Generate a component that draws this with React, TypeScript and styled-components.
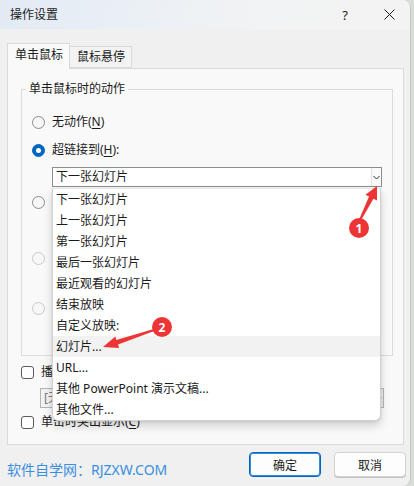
import React from "react";
import styled, { createGlobalStyle } from "styled-components";

const Global = createGlobalStyle`
  html, body { margin: 0; padding: 0; background: #d9dcd9; }
  body {
    font-family: "Noto Sans", "Noto Sans CJK SC", sans-serif;
    font-size: 12px;
    color: #1b1b1b;
  }
  * { box-sizing: border-box; }
`;

const Stage = styled.div`
  position: relative;
  width: 414px;
  height: 486px;
  overflow: hidden;
`;

const Window = styled.div`
  width: 411px;
  height: 486px;
  background: #f0f0f0;
  border-right: 1px solid #c6c6c6;
  border-radius: 0 8px 8px 0;
  display: flex;
  flex-direction: column;
  overflow: hidden;
`;

const TitleBar = styled.div`
  height: 29px;
  flex: none;
  display: flex;
  align-items: center;
  padding: 0 6px 0 10px;
  background: linear-gradient(100deg, #e2eaf4 0%, #ebf0f5 35%, #f2f3f4 65%, #f3f3f3 100%);
`;

const Title = styled.span`
  font-size: 12px;
  line-height: 16px;
  color: #1b1b1b;
  margin-right: auto;
`;

const CaptionButton = styled.span`
  width: 30px;
  height: 29px;
  display: flex;
  align-items: center;
  justify-content: center;
  font-size: 13px;
  color: #1b1b1b;
`;

const CaptionGap = styled.span`
  width: 14px;
`;

const Body = styled.div`
  flex: 1;
  display: flex;
  flex-direction: column;
  padding: 14px 6px 0 7px;
`;

const TabRow = styled.div`
  display: flex;
  align-items: flex-end;
  height: 25px;
  position: relative;
  z-index: 1;
`;

const Tab = styled.div<{ $active?: boolean }>`
  height: ${(p) => (p.$active ? "26px" : "22px")};
  margin-bottom: ${(p) => (p.$active ? "-1px" : "0")};
  padding: 0 6px 0 7px;
  display: flex;
  align-items: center;
  white-space: nowrap;
  border: 1px solid #dadada;
  border-bottom: ${(p) => (p.$active ? "none" : "1px solid #dadada")};
  border-left-width: ${(p) => (p.$active ? "1px" : "0")};
  background: ${(p) => (p.$active ? "#f9f9f9" : "#f3f3f3")};
  font-size: 12px;
  line-height: 16px;
  padding-bottom: ${(p) => (p.$active ? "3px" : "0")};
`;

const Pane = styled.div`
  height: 377px;
  border: 1px solid #dadada;
  background: #f9f9f9;
  padding: 12px 10px 0 13px;
  display: flex;
  flex-direction: column;
`;

const Group = styled.fieldset`
  margin: 0;
  padding: 0;
  min-width: 0;
  border: 1px solid #dcdcdc;
`;

const Legend = styled.legend`
  margin-left: 4px;
  padding: 0 3px;
  font-size: 12px;
  line-height: 16px;
`;

const GroupInner = styled.div`
  padding: 15px 10px 13px 10px;
  display: flex;
  flex-direction: column;
`;

const OptionRow = styled.div<{ $mt?: number; $disabled?: boolean }>`
  height: 20px;
  margin-top: ${(p) => p.$mt ?? 0}px;
  display: flex;
  align-items: center;
  gap: 7px;
  font-size: 12px;
  line-height: 16px;
  white-space: nowrap;
  color: ${(p) => (p.$disabled ? "#9d9d9d" : "#1b1b1b")};
  u { text-decoration: underline; text-underline-offset: 2px; }
`;

const Radio = styled.span<{ $checked?: boolean; $disabled?: boolean }>`
  width: 13px;
  height: 13px;
  flex: none;
  border-radius: 50%;
  border: 1px solid
    ${(p) => (p.$checked ? "#0067c0" : p.$disabled ? "#cacaca" : "#8a8a8a")};
  background: ${(p) => (p.$checked ? "#0067c0" : "#f7f7f7")};
  display: flex;
  align-items: center;
  justify-content: center;
  &::after {
    content: "";
    width: 5px;
    height: 5px;
    border-radius: 50%;
    background: #fff;
    display: ${(p) => (p.$checked ? "block" : "none")};
  }
`;

const Check = styled.span`
  width: 13px;
  height: 13px;
  flex: none;
  border-radius: 3px;
  border: 1px solid #5a5a5a;
  background: #fdfdfd;
`;

const ComboWrap = styled.div<{ $mt?: number; $ml?: number; $mr?: number }>`
  position: relative;
  margin-top: ${(p) => p.$mt ?? 0}px;
  margin-left: ${(p) => p.$ml ?? 0}px;
  margin-right: ${(p) => p.$mr ?? 0}px;
`;

const ComboBox = styled.div<{ $disabled?: boolean }>`
  height: 20px;
  display: flex;
  align-items: center;
  border: 1px solid ${(p) => (p.$disabled ? "#b4b4b4" : "#8c8c8c")};
  background: ${(p) => (p.$disabled ? "#f3f3f3" : "#ffffff")};
  color: ${(p) => (p.$disabled ? "#7a7a7a" : "#1b1b1b")};
  font-size: 12px;
  line-height: 16px;
`;

const ComboText = styled.span`
  flex: 1;
  padding-left: 3px;
  white-space: nowrap;
  overflow: hidden;
`;

const ComboArrow = styled.span<{ $sep?: boolean }>`
  width: 10px;
  height: 100%;
  display: flex;
  align-items: center;
  justify-content: center;
  border-left: 1px solid ${(p) => (p.$sep ? "#c4c4c4" : "#e2e2e2")};
  background: ${(p) => (p.$sep ? "#ececec" : "#fafafa")};
`;

const TextBox = styled.div<{ $mt?: number }>`
  height: 20px;
  margin: ${(p) => p.$mt ?? 0}px 10px 0 20px;
  border: 1px solid #c8c8c8;
  background: #f3f3f3;
`;

const DropList = styled.ul`
  position: absolute;
  z-index: 10;
  top: calc(100% + 1px);
  left: 0;
  width: 329px;
  margin: 0;
  padding: 0;
  list-style: none;
  background: #ffffff;
  border: 1px solid #d0d0d0;
  border-top-color: #e6e6e6;
  border-radius: 0 0 6px 6px;
  box-shadow: 0 5px 10px rgba(0, 0, 0, 0.16), 0 1px 3px rgba(0, 0, 0, 0.08);
`;

const DropItem = styled.li<{ $active?: boolean }>`
  height: 21px;
  line-height: 21px;
  padding-left: 3px;
  font-size: 12px;
  white-space: nowrap;
  color: #1b1b1b;
  background: ${(p) => (p.$active ? "#f2f2f2" : "transparent")};
`;

const Footer = styled.div`
  flex: 1;
  display: flex;
  align-items: flex-start;
  padding: 7px 0 0 0;
  margin-right: -2px;
`;

const Watermark = styled.span`
  margin-top: 10px;
  font-size: 14px;
  line-height: 16px;
  color: #3a8ee0;
  margin-right: auto;
`;

const Button = styled.button<{ $primary?: boolean }>`
  width: 72px;
  height: 25px;
  margin-left: 13px;
  border-radius: 4px;
  font-family: inherit;
  font-size: 12px;
  color: #1b1b1b;
  background: #fdfdfd;
  border: 1px solid ${(p) => (p.$primary ? "#0067c0" : "#d2d2d2")};
  box-shadow: ${(p) => (p.$primary ? "inset 0 0 0 1px #3a8ad6" : "0 1px 0 #c4c4c4")};
  padding: 0;
`;

const Overlay = styled.svg`
  position: absolute;
  left: 0;
  top: 0;
  pointer-events: none;
  z-index: 20;
`;

type Pt = [number, number];

function arrowPoints(tail: Pt, tip: Pt, tw: number, sw: number, headLen: number, hw: number) {
  const dx = tip[0] - tail[0];
  const dy = tip[1] - tail[1];
  const len = Math.hypot(dx, dy);
  const ux = dx / len;
  const uy = dy / len;
  const nx = -uy;
  const ny = ux;
  const bx = tip[0] - ux * headLen;
  const by = tip[1] - uy * headLen;
  const pts: Pt[] = [
    [tail[0] + (nx * tw) / 2, tail[1] + (ny * tw) / 2],
    [bx + (nx * sw) / 2, by + (ny * sw) / 2],
    [bx + (nx * hw) / 2, by + (ny * hw) / 2],
    tip,
    [bx - (nx * hw) / 2, by - (ny * hw) / 2],
    [bx - (nx * sw) / 2, by - (ny * sw) / 2],
    [tail[0] - (nx * tw) / 2, tail[1] - (ny * tw) / 2],
  ];
  return pts.map((p) => `${p[0].toFixed(1)},${p[1].toFixed(1)}`).join(" ");
}

const Chevron = ({ color = "#333" }: { color?: string }) => (
  <svg width="7" height="5" viewBox="0 0 7 5">
    <polyline points="0.5,1 3.5,4 6.5,1" fill="none" stroke={color} strokeWidth="1" />
  </svg>
);

const items = [
  "下一张幻灯片",
  "上一张幻灯片",
  "第一张幻灯片",
  "最后一张幻灯片",
  "最近观看的幻灯片",
  "结束放映",
  "自定义放映:",
  "幻灯片...",
  "URL...",
  "其他 PowerPoint 演示文稿...",
  "其他文件...",
];

export default function App() {
  return (
    <Stage>
      <Global />
      <Window>
        <TitleBar>
          <Title>操作设置</Title>
          <CaptionButton>?</CaptionButton>
          <CaptionGap />
          <CaptionButton>
            <svg width="11" height="11" viewBox="0 0 11 11">
              <path d="M0.5 0.5 L10.5 10.5 M10.5 0.5 L0.5 10.5" stroke="#1b1b1b" strokeWidth="1" />
            </svg>
          </CaptionButton>
        </TitleBar>
        <Body>
          <TabRow>
            <Tab $active>单击鼠标</Tab>
            <Tab>鼠标悬停</Tab>
          </TabRow>
          <Pane>
            <Group>
              <Legend>单击鼠标时的动作</Legend>
              <GroupInner>
                <OptionRow>
                  <Radio />
                  <span>
                    无动作(<u>N</u>)
                  </span>
                </OptionRow>
                <OptionRow $mt={8}>
                  <Radio $checked />
                  <span>
                    超链接到(<u>H</u>):
                  </span>
                </OptionRow>
                <ComboWrap $mt={7} $ml={20}>
                  <ComboBox>
                    <ComboText>下一张幻灯片</ComboText>
                    <ComboArrow>
                      <Chevron />
                    </ComboArrow>
                  </ComboBox>
                  <DropList>
                    {items.map((t, i) => (
                      <DropItem key={t} $active={i === 7}>
                        {t}
                      </DropItem>
                    ))}
                  </DropList>
                </ComboWrap>
                <OptionRow $mt={5}>
                  <Radio />
                </OptionRow>
                <TextBox $mt={4} />
                <OptionRow $mt={12} $disabled>
                  <Radio $disabled />
                </OptionRow>
                <TextBox $mt={4} />
                <OptionRow $mt={6} $disabled>
                  <Radio $disabled />
                </OptionRow>
                <TextBox $mt={4} />
              </GroupInner>
            </Group>
            <OptionRow $mt={6}>
              <Check />
              <span>
                播放声音(<u>P</u>):
              </span>
            </OptionRow>
            <ComboWrap $mt={6} $ml={19} $mr={9}>
              <ComboBox $disabled>
                <ComboText>[无声音]</ComboText>
                <ComboArrow $sep>
                  <Chevron color="#8a8a8a" />
                </ComboArrow>
              </ComboBox>
            </ComboWrap>
            <OptionRow $mt={4}>
              <Check />
              <span>
                单击时突出显示(<u>C</u>)
              </span>
            </OptionRow>
          </Pane>
          <Footer>
            <Watermark>软件自学网：RJZXW.COM</Watermark>
            <Button $primary>确定</Button>
            <Button>取消</Button>
          </Footer>
        </Body>
      </Window>
      <Overlay width="414" height="486" viewBox="0 0 414 486">
        <polygon points={arrowPoints([360, 220], [377, 186], 2, 5, 13, 13)} fill="#ee3535" />
        <circle cx="359" cy="228" r="10" fill="#ee3535" />
        <text x="359" y="232.5" textAnchor="middle" fontSize="12" fontWeight="700" fill="#fff" fontFamily="Noto Sans, sans-serif">
          1
        </text>
        <polygon points={arrowPoints([154, 330], [103, 347], 2, 5, 15, 12)} fill="#ee3535" />
        <circle cx="162" cy="327" r="10" fill="#ee3535" />
        <text x="162" y="331.5" textAnchor="middle" fontSize="12" fontWeight="700" fill="#fff" fontFamily="Noto Sans, sans-serif">
          2
        </text>
      </Overlay>
    </Stage>
  );
}
